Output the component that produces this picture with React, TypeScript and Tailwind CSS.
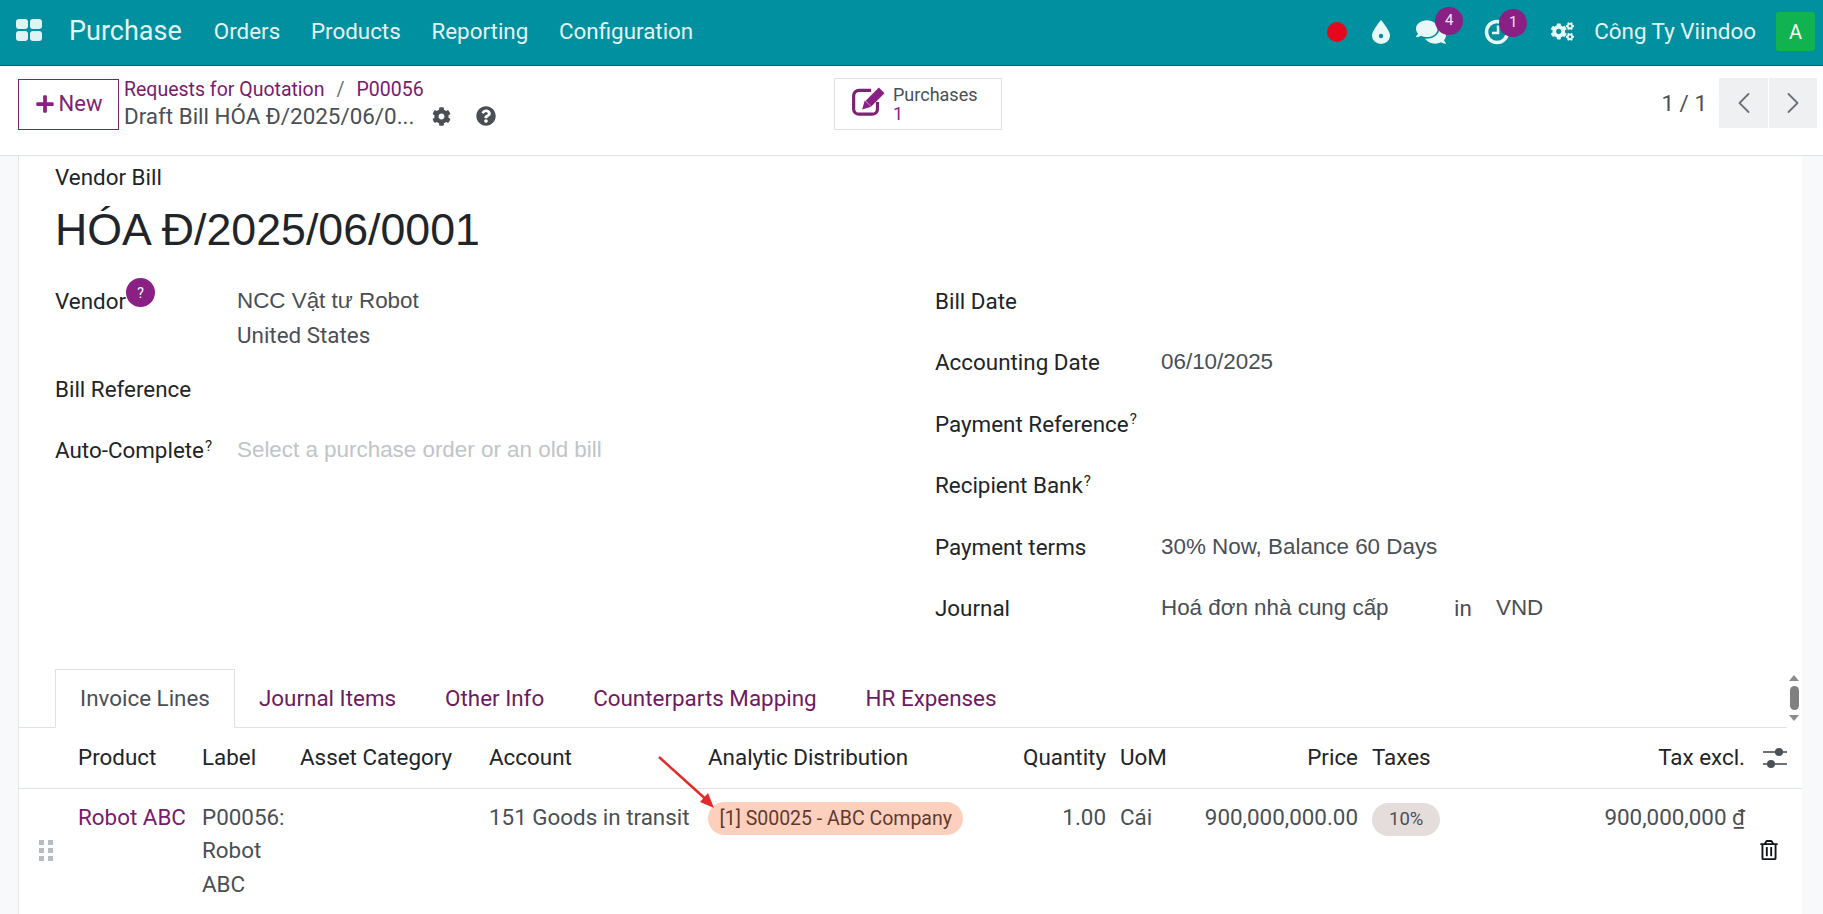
import type { ReactNode } from "react";
import { FaCog, FaCogs, FaComments, FaPlus, FaQuestionCircle, FaRegTrashAlt } from "react-icons/fa";
import { ChevronLeft, ChevronRight } from "lucide-react";

const lineGrid =
  "grid grid-cols-[59px_124px_98px_189px_219px_292px_106px_14px_80px_158px_14px_228px_145px_57px]";

function AppsIcon() {
  return (
    <div className="mb-[4px] grid h-[22px] w-[26px] grid-cols-2 gap-[2px]">
      <span className="rounded-[3px] bg-[#dff3f5]" />
      <span className="rounded-[3px] bg-[#dff3f5]" />
      <span className="rounded-[3px] bg-[#dff3f5]" />
      <span className="rounded-[3px] bg-[#dff3f5]" />
    </div>
  );
}

function DropIcon() {
  return (
    <svg className="ml-[25px]" width="18" height="24" viewBox="0 0 18 24" fill="#e8f7f8">
      <path d="M9 0C9 0 18 10.500 18 15.500A9 8.500 0 0 1 0 15.500C0 10.500 9 0 9 0Z" />
      <circle cx="9" cy="16" r="2.200" fill="#01909f" />
    </svg>
  );
}

function ClockIcon() {
  return (
    <svg width="26" height="26" viewBox="0 0 26 26" fill="none" stroke="#e8f7f8">
      <circle cx="13" cy="13" r="10.500" strokeWidth="3.500" />
      <path d="M14 6.500V14H8" strokeWidth="2.500" />
    </svg>
  );
}

function PurchasesIcon() {
  return (
    <svg className="mt-[2px] shrink-0" width="36" height="30" viewBox="0 0 34 28" fill="none">
      <path d="M19 3H7.500A5 5 0 0 0 2.500 8V20.500A5 5 0 0 0 7.500 25.500H20A5 5 0 0 0 25 20.500V14" stroke="#7c2373" strokeWidth="3" />
      <path d="M29 3L16.500 15.500" stroke="#8a1f84" strokeWidth="7.500" />
      <polygon points="10.500,21 13,12.500 19,18.500" fill="#8a1f84" />
    </svg>
  );
}

function Badge({ value, left }: { value: string; left: string }) {
  return (
    <span className={`absolute -top-[10px] ${left} flex h-[28px] w-[28px] items-center justify-center rounded-full bg-[#8a1f84] text-[15px] text-[#f3e6f2]`}>
      {value}
    </span>
  );
}

function NavBar() {
  return (
    <header className="flex h-[66px] items-center border-b border-[#04606b] bg-[#01909f] pb-[2px] pl-[16px] pr-[8px] text-[#e3f5f6]">
      <AppsIcon />
      <span className="ml-[27px] text-[27px]">Purchase</span>
      <nav className="ml-[32px] flex gap-[30.700px] text-[22.400px]">
        <span>Orders</span>
        <span>Products</span>
        <span>Reporting</span>
        <span>Configuration</span>
      </nav>
      <div className="ml-auto flex items-center">
        <span className="h-[20px] w-[20px] rounded-full bg-[#e5081c]" />
        <DropIcon />
        <span className="relative ml-[26px] flex">
          <FaComments className="text-[30px] text-[#e8f7f8]" />
          <Badge value="4" left="left-[19px]" />
        </span>
        <span className="relative ml-[38px] flex">
          <ClockIcon />
          <Badge value="1" left="left-[15px]" />
        </span>
        <FaCogs className="ml-[41px] text-[23px] text-[#e8f7f8]" />
        <span className="ml-[20px] text-[22.400px]">Công Ty Viindoo</span>
        <span className="ml-[20px] flex h-[39px] w-[39px] items-center justify-center rounded-[3px] bg-[#10b34f] text-[20px] text-white">
          A
        </span>
      </div>
    </header>
  );
}

function ControlPanel() {
  return (
    <div className="flex h-[90px] border-b border-[#dee2e6] bg-white pl-[18px] pr-[6px] pt-[12px]">
      <button className="mt-[1px] flex h-[51px] w-[101px] items-center justify-center gap-[4px] border border-[#7c2373] pb-[2px] text-[22px] text-[#7c2373]">
        <FaPlus className="text-[20px] text-[#8a1f84]" />
        New
      </button>
      <div className="ml-[6px] w-[709px] text-[#4a4f55]">
        <div className="-mt-[1px] flex gap-[12px] text-[19.500px] leading-[26px] text-[#7a1a6d]">
          <span className="-ml-[1px]">Requests for Quotation</span>
          <span className="text-[#6b7178]">/</span>
          <span>P00056</span>
        </div>
        <div className="-ml-[1px] -mt-[1px] flex items-center text-[22.400px] leading-[28px]">
          <span>Draft Bill HÓA Đ/2025/06/0...</span>
          <FaCog className="ml-[18px] text-[19px]" />
          <FaQuestionCircle className="ml-[25px] text-[20px]" />
        </div>
      </div>
      <button className="flex h-[52px] w-[168px] items-start border border-[#dee2e6] pl-[16px] pt-[6px]">
        <PurchasesIcon />
        <span className="ml-[6px] flex flex-col text-left text-[18px] leading-[19px]">
          <span className="text-[#4a4f55]">Purchases</span>
          <span className="text-[#8a1f84]">1</span>
        </span>
      </button>
      <div className="ml-auto flex h-[50px]">
        <span className="mr-[12px] self-center pt-[2px] text-[22.400px] text-[#4a4f55]">1 / 1</span>
        <span className="flex w-[49px] items-center justify-center bg-[#eff0f1] text-[#6b7178]">
          <ChevronLeft size={36} strokeWidth={1.2} />
        </span>
        <span className="ml-[1px] flex w-[48px] items-center justify-center bg-[#eff0f1] text-[#6b7178]">
          <ChevronRight size={36} strokeWidth={1.2} />
        </span>
      </div>
    </div>
  );
}

function Label({ children, help }: { children: string; help?: boolean }) {
  return (
    <span className="text-[#212529]">
      {children}
      {help && <sup className="ml-[1px] text-[15px]">?</sup>}
    </span>
  );
}

function RightRow({ label, help, children }: { label: string; help?: boolean; children?: ReactNode }) {
  return (
    <div className="flex h-[61.400px] leading-[34px]">
      <div className="w-[226px]">
        <Label help={help}>{label}</Label>
      </div>
      <div className="flex text-[#4a4f55]">{children}</div>
    </div>
  );
}

function Form() {
  return (
    <div className="flex h-[385px] pl-[36px] text-[22.400px]">
      <div className="w-[880px]">
        <div className="flex leading-[34px]">
          <div className="relative w-[182px] text-[#212529]">
            Vendor
            <span className="absolute left-[71px] -top-[6px] flex h-[29px] w-[29px] items-center justify-center rounded-full bg-[#8a1f84] text-[14px] leading-none text-white">
              ?
            </span>
          </div>
          <div className="text-[#4a4f55]">
            <div className="font-['Liberation_Sans',sans-serif]">NCC Vật tư Robot</div>
            <div>United States</div>
          </div>
        </div>
        <div className="mt-[20px] leading-[34px]">
          <Label>Bill Reference</Label>
        </div>
        <div className="mt-[27px] flex leading-[34px]">
          <div className="w-[182px]">
            <Label help>Auto-Complete</Label>
          </div>
          <span className="font-['Liberation_Sans',sans-serif] text-[#c0c4c9]">Select a purchase order or an old bill</span>
        </div>
      </div>
      <div>
        <RightRow label="Bill Date" />
        <RightRow label="Accounting Date">
          <span className="font-['Liberation_Sans',sans-serif]">06/10/2025</span>
        </RightRow>
        <RightRow label="Payment Reference" help />
        <RightRow label="Recipient Bank" help />
        <RightRow label="Payment terms">
          <span className="font-['Liberation_Sans',sans-serif]">30% Now, Balance 60 Days</span>
        </RightRow>
        <RightRow label="Journal">
          <span className="w-[293px] font-['Liberation_Sans',sans-serif]">Hoá đơn nhà cung cấp</span>
          <span className="w-[42px]">in</span>
          <span className="font-['Liberation_Sans',sans-serif]">VND</span>
        </RightRow>
      </div>
    </div>
  );
}

function Tabs() {
  return (
    <div className="relative mr-[15px] flex h-[59px] border-b border-[#dee2e6] pl-[36px] text-[22.400px] text-[#6d1a62]">
      <span className="-mb-[1px] flex h-[59px] w-[180px] items-center justify-center border border-[#dee2e6] border-b-white bg-white text-[#4a4f55]">
        Invoice Lines
      </span>
      <div className="ml-[24px] flex items-center gap-[49px] pt-[2px]">
        <span>Journal Items</span>
        <span>Other Info</span>
        <span>Counterparts Mapping</span>
        <span>HR Expenses</span>
      </div>
      <div className="absolute right-[-12px] top-[6px] flex h-[46px] w-[10px] flex-col items-center justify-between">
        <span className="h-0 w-0 border-x-[5px] border-b-[6px] border-x-transparent border-b-[#8b8b8b]" />
        <span className="h-[24px] w-[9px] rounded-full bg-[#808080]" />
        <span className="h-0 w-0 border-x-[5px] border-t-[6px] border-x-transparent border-t-[#8b8b8b]" />
      </div>
    </div>
  );
}

function Lines() {
  return (
    <div className="text-[22.400px] text-[#212529]">
      <div className={`${lineGrid} h-[61px] items-center border-b border-[#dee2e6]`}>
        <span />
        <span>Product</span>
        <span>Label</span>
        <span>Asset Category</span>
        <span>Account</span>
        <span>Analytic Distribution</span>
        <span className="text-right">Quantity</span>
        <span />
        <span>UoM</span>
        <span className="text-right">Price</span>
        <span />
        <span>Taxes</span>
        <span className="text-right">Tax excl.</span>
        <span className="flex justify-center pl-[3px]">
          <svg width="24" height="22" viewBox="0 0 24 22" fill="#4a5058">
            <rect x="0" y="4.200" width="24" height="1.600" />
            <circle cx="16" cy="5" r="4" />
            <rect x="0" y="16.200" width="24" height="1.600" />
            <circle cx="8" cy="17" r="4" />
          </svg>
        </span>
      </div>
      <div className={`${lineGrid} relative pt-[12px] leading-[33.300px] text-[#4a4f55]`}>
        <span className="relative">
          <span className="absolute left-[20px] top-[39px] grid grid-cols-2 gap-x-[4px] gap-y-[3px]">
            {[0, 1, 2, 3, 4, 5].map((i) => (
              <span key={i} className="h-[5px] w-[5px] bg-[#b8bdc2]" />
            ))}
          </span>
        </span>
        <span className="text-[#7a1a6d]">Robot ABC</span>
        <span className="pr-[30px]">P00056: Robot ABC</span>
        <span />
        <span>151 Goods in transit</span>
        <span>
          <span className="inline-flex h-[33px] items-center rounded-full bg-[#fdd0bd] px-[11.500px] text-[19.500px] text-[#5f3a30]">
            [1] S00025 - ABC Company
          </span>
        </span>
        <span className="text-right">1.00</span>
        <span />
        <span>Cái</span>
        <span className="text-right">900,000,000.00</span>
        <span />
        <span>
          <span className="inline-flex h-[33px] items-center rounded-full bg-[#e5dcdc] px-[17px] text-[18.500px]">
            10%
          </span>
        </span>
        <span className="whitespace-nowrap text-right">
          900,000,000 <span className="underline">₫</span>
        </span>
        <span className="flex justify-center pr-[10px] pt-[39px]">
          <FaRegTrashAlt className="text-[20px] text-[#111418]" />
        </span>
        <svg className="absolute left-[621px] -top-[33px]" width="80" height="64" viewBox="0 0 80 64">
          <line x1="19" y1="1" x2="70" y2="47" stroke="#e42a2a" strokeWidth="2.500" />
          <polygon points="74,52 60,46 68,37" fill="#e42a2a" />
        </svg>
      </div>
    </div>
  );
}

export default function App() {
  return (
    <div className="h-[914px] overflow-hidden bg-[#f8f9fa] font-['Roboto',sans-serif]">
      <NavBar />
      <ControlPanel />
      <div className="flex">
        <div className="w-[18px] shrink-0" />
        <main className="h-[758px] w-[1784px] border-l border-[#e3e6e9] bg-white">
          <div className="pl-[36px] pt-[9px] text-[22.400px] leading-[24px] text-[#212529]">Vendor Bill</div>
          <h1 className="pl-[36px] pt-[9px] font-['Liberation_Sans',sans-serif] text-[44.700px] leading-[64px] text-[#212529]">HÓA Đ/2025/06/0001</h1>
          <div className="pt-[22px]">
            <Form />
          </div>
          <Tabs />
          <Lines />
        </main>
      </div>
    </div>
  );
}
